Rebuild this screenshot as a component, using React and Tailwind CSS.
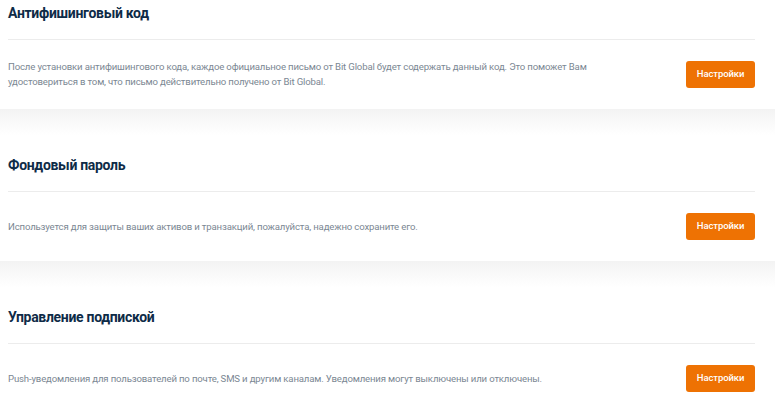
import React from "react";

const sections = [
    {
        title: "Антифишинговый код",
        text: "После установки антифишингового кода, каждое официальное письмо от Bit Global будет содержать данный код. Это поможет Вам удостовериться в том, что письмо действительно получено от Bit Global.",
    },
    {
        title: "Фондовый пароль",
        text: "Используется для защиты ваших активов и транзакций, пожалуйста, надежно сохраните его.",
    },
    {
        title: "Управление подпиской",
        text: "Push-уведомления для пользователей по почте, SMS и другим каналам. Уведомления могут выключены или отключены.",
    },
];

const SettingCard = ({ title, text }) => (
    <div className="bg-white pl-2 pr-5 h-[126px] flex flex-col">
        <div className="pt-5 h-[57px] border-b border-[#ececec]">
            <h2 className="text-[14px] leading-5 font-bold text-[#0e2b47] tracking-[-0.3px]">
                {title}
            </h2>
        </div>
        <div className="h-[68px] flex items-center justify-between gap-8">
            <p className="text-[9.6px] leading-[15px] text-[#7b8793] tracking-[-0.16px] max-w-[590px]">
                {text}
            </p>
            <button className="shrink-0 w-[69px] h-[27px] rounded-[3px] bg-[#ee7203] text-white text-[9.5px] font-medium tracking-[-0.1px]">
                Настройки
            </button>
        </div>
    </div>
);

export default function App() {
    return (
        <div
            className="w-[775px] h-[404px] overflow-hidden bg-white"
            style={{ fontFamily: 'Roboto, "Noto Sans", sans-serif' }}
        >
            <div className="-mt-[17px]">
                {sections.map((s, i) => (
                    <div key={s.title}>
                        {i > 0 && (
                            <div className="h-[26px] bg-gradient-to-b from-[#f3f3f3] to-white" />
                        )}
                        <SettingCard title={s.title} text={s.text} />
                    </div>
                ))}
            </div>
        </div>
    );
}
